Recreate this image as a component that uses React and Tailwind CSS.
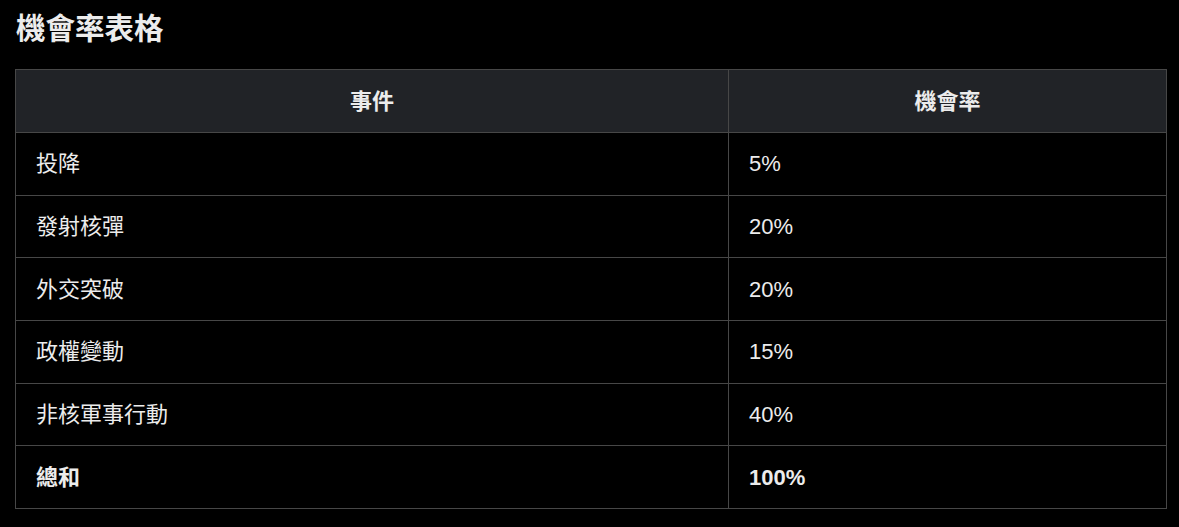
import React from 'react';

const rows = [
  { event: '投降', rate: '5%' },
  { event: '發射核彈', rate: '20%' },
  { event: '外交突破', rate: '20%' },
  { event: '政權變動', rate: '15%' },
  { event: '非核軍事行動', rate: '40%' },
];

const cell = 'h-[62.7px] border border-[#474747] px-5';

const App = () => {
  return (
    <div
      className="w-[1179px] h-[527px] bg-black text-[#ececec] pl-[15px] pt-[10px] overflow-hidden"
      style={{ fontFamily: '"Liberation Sans", "Noto Sans CJK TC", sans-serif' }}
    >
      <h2 className="text-[29.5px] font-bold leading-[37px] pl-px">機會率表格</h2>

      <table className="mt-[22px] w-[1152px] border-collapse table-fixed text-[22px]">
        <colgroup>
          <col className="w-[713px]" />
          <col />
        </colgroup>
        <thead>
          <tr className="bg-[#212327]">
            <th className="h-[63px] border border-[#474747] font-bold text-center">事件</th>
            <th className="h-[63px] border border-[#474747] font-bold text-center">機會率</th>
          </tr>
        </thead>
        <tbody>
          {rows.map((r) => (
            <tr key={r.event}>
              <td className={cell}>{r.event}</td>
              <td className={cell}>{r.rate}</td>
            </tr>
          ))}
          <tr>
            <td className={cell + ' font-bold'}>總和</td>
            <td className={cell + ' font-bold'}>100%</td>
          </tr>
        </tbody>
      </table>
    </div>
  );
};

export default App;
